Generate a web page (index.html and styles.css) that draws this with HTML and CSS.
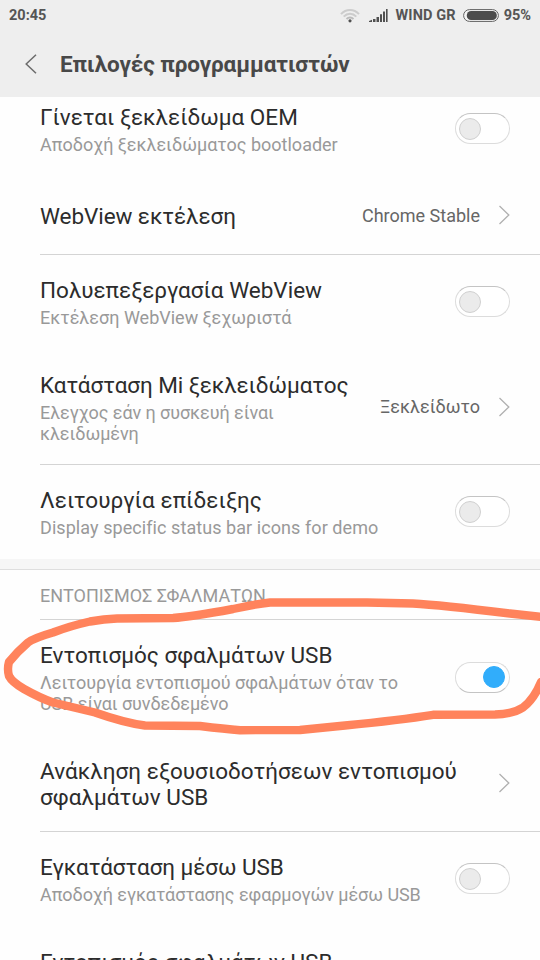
FILE: index.html
```html
<!DOCTYPE html>
<html lang="el">
<head>
<meta charset="utf-8">
<title>Επιλογές προγραμματιστών</title>
<link rel="stylesheet" href="styles.css">
</head>
<body>
<div class="screen">
  <header class="header">
    <div class="status">
      <span class="time">20:45</span>
      <svg class="wifi" width="20" height="14" viewBox="0 0 20 14" fill="none">
        <path d="M1 5.2C6-.3 14-.3 19 5.2M3.7 7.6c3.6-3.8 9-3.8 12.6 0" stroke="#cccccc" stroke-width="2"/>
        <path d="M6.5 10c2-2 5-2 7 0" stroke="#bbb" stroke-width="1.8"/>
        <circle cx="10" cy="11.8" r="1.6" fill="#505050"/>
      </svg>
      <svg class="signal" width="19" height="13" viewBox="0 0 19 13" fill="#505050">
        <path d="M0 13v-1l3-1.3V13zM4 10h2.5v3H4zM7.5 8H10v5H7.5zM11 5.3h2V13h-2zM14 2.5h2V13h-2zM17 0h1.6v13H17z"/>
      </svg>
      <span class="carrier">WIND GR</span>
      <svg class="battery" width="36" height="13" viewBox="0 0 36 13">
        <rect x=".6" y=".6" width="34.8" height="11.8" rx="5.9" fill="#f4f4f4" stroke="#606060"/>
        <rect x="3.8" y="2" width="30" height="9" rx="4.3" fill="#4c4c4c"/>
      </svg>
      <span class="percent">95%</span>
    </div>
    <div class="titlebar">
      <svg width="12" height="20" viewBox="0 0 12 20" fill="none" stroke="#6c6c6c" stroke-width="1.5"><path d="M11 .7 1.2 10l9.8 9.3"/></svg>
      <h1>Επιλογές προγραμματιστών</h1>
    </div>
  </header>

  <main class="list">
    <div class="row first">
      <div class="text"><div class="name">Γίνεται ξεκλείδωμα OEM</div><div class="desc">Αποδοχή ξεκλειδώματος bootloader</div></div>
      <div class="toggle"></div>
    </div>
    <div class="row short">
      <div class="text"><div class="name snug">WebView εκτέλεση</div></div>
      <span class="value">Chrome Stable</span>
      <svg class="chev" width="12" height="20" viewBox="0 0 12 20"><path d="M1.500 1l9.300 9-9.300 9"/></svg>
    </div>
    <div class="line"></div>
    <div class="row single">
      <div class="text"><div class="name">Πολυεπεξεργασία WebView</div><div class="desc">Εκτέλεση WebView ξεχωριστά</div></div>
      <div class="toggle"></div>
    </div>
    <div class="row tall">
      <div class="text"><div class="name snug">Κατάσταση Mi ξεκλειδώματος</div><div class="desc snug">Ελεγχος εάν η συσκευή είναι<br>κλειδωμένη</div></div>
      <span class="value">Ξεκλείδωτο</span>
      <svg class="chev" width="12" height="20" viewBox="0 0 12 20"><path d="M1.500 1l9.300 9-9.300 9"/></svg>
    </div>
    <div class="line"></div>
    <div class="row single">
      <div class="text"><div class="name loose">Λειτουργία επίδειξης</div><div class="desc loose">Display specific status bar icons for demo</div></div>
      <div class="toggle"></div>
    </div>
    <div class="band"></div>
    <h2 class="section">ΕΝΤΟΠΙΣΜΟΣ ΣΦΑΛΜΑΤΩΝ</h2>
    <div class="line"></div>
    <div class="row tall debug">
      <div class="text"><div class="name">Εντοπισμός σφαλμάτων USB</div><div class="desc">Λειτουργία εντοπισμού σφαλμάτων όταν το<br><span class="snug">USB είναι συνδεδεμένο</span></div></div>
      <div class="toggle on"></div>
    </div>
    <div class="row two">
      <div class="text"><div class="name wide">Ανάκληση εξουσιοδοτήσεων εντοπισμού<br>σφαλμάτων USB</div></div>
      <svg class="chev" width="12" height="20" viewBox="0 0 12 20"><path d="M1.500 1l9.300 9-9.300 9"/></svg>
    </div>
    <div class="line"></div>
    <div class="row single">
      <div class="text"><div class="name snug">Εγκατάσταση μέσω USB</div><div class="desc snug">Αποδοχή εγκατάστασης εφαρμογών μέσω USB</div></div>
      <div class="toggle"></div>
    </div>
    <div class="row last">
      <div class="text"><div class="name">Εντοπισμός σφαλμάτων USB</div></div>
    </div>
  </main>

  <svg class="mark" width="540" height="960" viewBox="0 0 540 960">
    <path d="M546 617.500L510 613.500Q440 605 413 603.500L367 602.500L270 602.500Q256 604 233 609Q190 617 173 618L117 618.500Q104 619 90 621.500Q70 626 53 632.500Q34 638 28 642.500Q18 651 9 662Q7 669 9 676Q12 682 24 689Q40 698 53 702.500L95 712.500Q125 723 145 725.500L200 726Q225 729 240 730.200L300 730Q330 727 345 725.500Q400 720 433 714.800L495 714.500Q513 714 523 707.500Q534 699 541 682"/>
  </svg>
</div>
</body>
</html>
```

FILE: styles.css
```css
*, *::before { box-sizing: border-box; }
body { margin: 0; font-family: Roboto, "Noto Sans", sans-serif; background: #fefefe; }
.screen { position: relative; width: 540px; height: 960px; overflow: hidden; display: flex; flex-direction: column; }

.header { height: 97px; flex: none; background: #eee; color: #484848; }
.status { height: 31px; padding: 0 9px; display: flex; align-items: center; font-size: 14.5px; font-weight: 700; color: #555; white-space: nowrap; }
.time { flex: 1; }
.signal { margin-left: 9px; }
.carrier { margin-left: 8px; letter-spacing: 0.1px; }
.battery { margin: 0 4.5px 0 7.5px; }
.status svg { flex: none; }
.titlebar { height: 66px; display: flex; align-items: center; padding: 0 0 0 25px; gap: 23px; }
.titlebar h1 { margin: 0; font-size: 22.5px; font-weight: 700; line-height: 26px; letter-spacing: -0.08px; white-space: nowrap; }

.list { flex: 1; overflow: hidden; display: flex; flex-direction: column; }
.row { flex: none; display: flex; align-items: center; padding: 0 30px 0 40px; }
.single { height: 94px; }
.first { height: 95px; margin-top: -16px; }
.short { height: 78px; }
.tall { height: 115px; }
.two { height: 96px; }
.last { height: 94px; align-items: flex-start; padding-top: 23px; }
.text { flex: 1; padding-top: 2px; white-space: nowrap; }
.single .text, .debug .text, .last .text { padding-top: 0; }
.name { font-size: 22.5px; line-height: 26px; color: #2c2c2c; }
.desc { margin-top: 4px; font-size: 18px; line-height: 21px; color: #999; }
.snug { letter-spacing: -0.07px; }
.loose { letter-spacing: 0.07px; }
.wide { letter-spacing: 0.03px; }
.line { height: 1px; flex: none; margin-left: 40px; background: #d4d4d4; }
.band { height: 11px; flex: none; background: #f6f6f6; border-bottom: 1px solid #dedede; }
.section { margin: 0; height: 49px; flex: none; padding: 15px 0 0 40px; font-size: 18px; line-height: 21px; font-weight: 400; color: #999; white-space: nowrap; }
.value { font-size: 18px; line-height: 21px; color: #666; white-space: nowrap; }
.chev { flex: none; margin-left: 18px; fill: none; stroke: #b0b0b0; stroke-width: 1.3; }

.toggle { flex: none; width: 55px; height: 31px; padding: 4px 4px 3px 3px; display: flex; border: 1px solid #dcdcdc; border-top-color: #c4c4c4; border-radius: 16px; background: #fff; }
.single .toggle { margin-bottom: 1px; }
.toggle::before { content: ""; width: 22px; height: 22px; border: 1px solid #d0d0d0; border-radius: 50%; background: #ebebeb; }
.toggle.on { justify-content: flex-end; padding-top: 3px; border-color: #dcdcdc; border-bottom-color: #c4c4c4; }
.toggle.on::before { background: #31adfb; border-color: #31adfb; }

.mark { position: absolute; left: 0; top: 0; fill: none; stroke: #ff835c; stroke-width: 8.4; stroke-linejoin: round; stroke-linecap: round; }
```
